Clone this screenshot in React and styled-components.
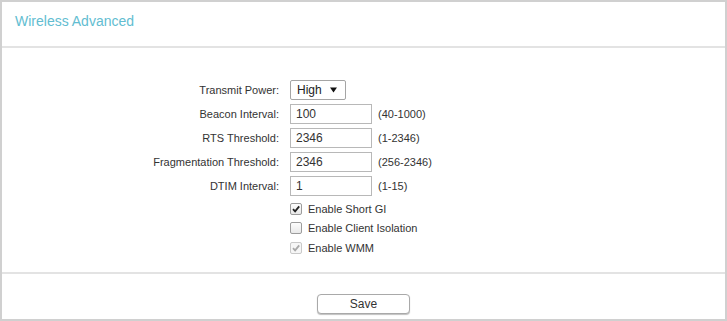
import React from "react";
import styled, { createGlobalStyle } from "styled-components";

const GlobalStyle = createGlobalStyle`
  html, body {
    margin: 0;
    padding: 0;
    background: #fff;
  }
  body {
    font-family: "Liberation Sans", Arial, sans-serif;
    color: #333;
  }
`;

const fields = [
  { label: "Beacon Interval:", value: "100", hint: "(40-1000)" },
  { label: "RTS Threshold:", value: "2346", hint: "(1-2346)" },
  { label: "Fragmentation Threshold:", value: "2346", hint: "(256-2346)" },
  { label: "DTIM Interval:", value: "1", hint: "(1-15)" },
];

const options = [
  { label: "Enable Short GI", checked: true },
  { label: "Enable Client Isolation", checked: false },
  { label: "Enable WMM", checked: true, disabled: true },
];

export default function App() {
  return (
    <>
      <GlobalStyle />
      <Panel>
        <Header>
          <Title>Wireless Advanced</Title>
        </Header>
        <Form>
          <FieldRow>
            <Label>Transmit Power:</Label>
            <Controls>
              <SelectBox>
                <span>High</span>
                <svg width="7" height="6" viewBox="0 0 7 6">
                  <path d="M0 0.5 L7 0.5 L3.5 5.5 Z" fill="#111" />
                </svg>
              </SelectBox>
            </Controls>
          </FieldRow>
          {fields.map((f) => (
            <FieldRow key={f.label}>
              <Label>{f.label}</Label>
              <Controls>
                <TextInput defaultValue={f.value} />
                <Hint>{f.hint}</Hint>
              </Controls>
            </FieldRow>
          ))}
          <CheckList>
            {options.map((o) => (
              <CheckRow key={o.label}>
                <span />
                <CheckLabel>
                  <Box $disabled={o.disabled}>
                    {o.checked && (
                      <svg width="10" height="10" viewBox="0 0 10 10">
                        <path
                          d="M2 5.2 L4.1 7.4 L8.2 2.4"
                          fill="none"
                          stroke={o.disabled ? "#a8a8a8" : "#222"}
                          strokeWidth="1.8"
                        />
                      </svg>
                    )}
                  </Box>
                  {o.label}
                </CheckLabel>
              </CheckRow>
            ))}
          </CheckList>
        </Form>
        <Footer>
          <SaveButton>Save</SaveButton>
        </Footer>
      </Panel>
    </>
  );
}

const Panel = styled.div`
  box-sizing: border-box;
  width: 727px;
  height: 321px;
  border: 2px solid #d0d0d0;
  display: flex;
  flex-direction: column;
`;

const Header = styled.div`
  box-sizing: border-box;
  height: 46px;
  padding: 11px 0 0 13px;
  border-bottom: 2px solid #e3e3e3;
`;

const Title = styled.h1`
  margin: 0;
  font-size: 14px;
  line-height: 17px;
  font-weight: normal;
  color: #62bdd1;
`;

const Form = styled.div`
  box-sizing: border-box;
  height: 226px;
  padding-top: 32px;
  border-bottom: 2px solid #e3e3e3;
  display: flex;
  flex-direction: column;
  gap: 4px;
`;

const FieldRow = styled.div`
  display: grid;
  grid-template-columns: 277px 1fr;
  column-gap: 11px;
  align-items: center;
  height: 20px;
`;

const Label = styled.label`
  text-align: right;
  font-size: 11px;
  color: #333;
`;

const Controls = styled.div`
  display: flex;
  align-items: center;
  gap: 6px;
`;

const SelectBox = styled.div`
  box-sizing: border-box;
  width: 56px;
  height: 20px;
  border: 1px solid #a5a5a5;
  border-radius: 2px;
  padding: 0 8px 0 6px;
  display: flex;
  align-items: center;
  justify-content: space-between;
  font-size: 12px;
  color: #222;
`;

const TextInput = styled.input`
  box-sizing: border-box;
  width: 82px;
  height: 20px;
  margin: 0;
  border: 1px solid #b8b8b8;
  padding: 0 5px;
  font-family: "Liberation Sans", Arial, sans-serif;
  font-size: 12px;
  color: #333;
  outline: none;
`;

const Hint = styled.span`
  font-size: 11px;
  color: #333;
`;

const CheckList = styled.div`
  margin-top: -1px;
  display: flex;
  flex-direction: column;
`;

const CheckRow = styled.div`
  display: grid;
  grid-template-columns: 277px 1fr;
  column-gap: 11px;
  align-items: center;
  height: 19.5px;
`;

const CheckLabel = styled.label`
  display: flex;
  align-items: center;
  gap: 6px;
  font-size: 11px;
  color: #333;
`;

const Box = styled.span`
  box-sizing: border-box;
  width: 12px;
  height: 12px;
  border: 1px solid ${(p) => (p.$disabled ? "#c9c9c9" : "#9c9c9c")};
  border-radius: 2px;
  background: ${(p) => (p.$disabled ? "#f6f6f6" : "linear-gradient(#fdfdfd, #e9e9e9)")};
  display: flex;
  align-items: center;
  justify-content: center;
`;

const Footer = styled.div`
  flex: 1;
  display: flex;
  justify-content: center;
  padding-top: 20px;
`;

const SaveButton = styled.button`
  box-sizing: border-box;
  width: 93px;
  height: 20px;
  border: 1px solid #a9a9a9;
  border-radius: 4px;
  background: #fff;
  box-shadow: 0 1px 1px rgba(0, 0, 0, 0.25);
  font-family: "Liberation Sans", Arial, sans-serif;
  font-size: 12px;
  color: #333;
  padding: 0;
`;
